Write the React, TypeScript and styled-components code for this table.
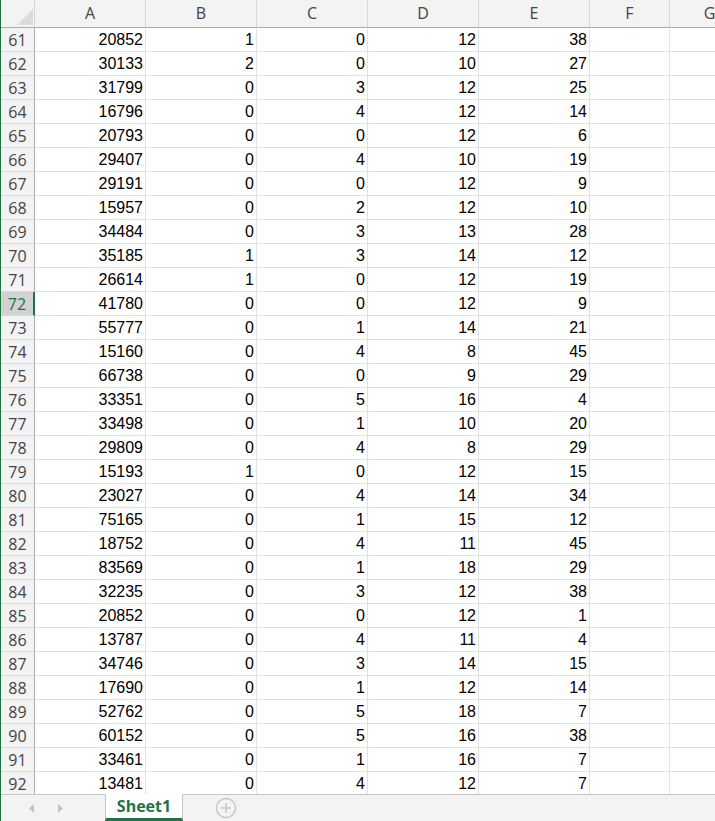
import styled, { createGlobalStyle } from "styled-components";

const GlobalStyle = createGlobalStyle`
  html, body {
    margin: 0;
    padding: 0;
    overflow: hidden;
    background: #fff;
  }
  * { box-sizing: border-box; }
`;

const columns = ["A", "B", "C", "D", "E", "F", "G"];

const rows: number[][] = [
  [20852, 1, 0, 12, 38],
  [30133, 2, 0, 10, 27],
  [31799, 0, 3, 12, 25],
  [16796, 0, 4, 12, 14],
  [20793, 0, 0, 12, 6],
  [29407, 0, 4, 10, 19],
  [29191, 0, 0, 12, 9],
  [15957, 0, 2, 12, 10],
  [34484, 0, 3, 13, 28],
  [35185, 1, 3, 14, 12],
  [26614, 1, 0, 12, 19],
  [41780, 0, 0, 12, 9],
  [55777, 0, 1, 14, 21],
  [15160, 0, 4, 8, 45],
  [66738, 0, 0, 9, 29],
  [33351, 0, 5, 16, 4],
  [33498, 0, 1, 10, 20],
  [29809, 0, 4, 8, 29],
  [15193, 1, 0, 12, 15],
  [23027, 0, 4, 14, 34],
  [75165, 0, 1, 15, 12],
  [18752, 0, 4, 11, 45],
  [83569, 0, 1, 18, 29],
  [32235, 0, 3, 12, 38],
  [20852, 0, 0, 12, 1],
  [13787, 0, 4, 11, 4],
  [34746, 0, 3, 14, 15],
  [17690, 0, 1, 12, 14],
  [52762, 0, 5, 18, 7],
  [60152, 0, 5, 16, 38],
  [33461, 0, 1, 16, 7],
  [13481, 0, 4, 12, 7],
];

const FIRST_ROW = 61;
const SELECTED_ROW = 72;

export default function App() {
  return (
    <>
      <GlobalStyle />
      <Window>
        <Sheet>
          <Grid>
            <Corner>
              <svg width="33" height="27" viewBox="0 0 33 27">
                <polygon points="16,25 32,25 32,9" fill="#dcdcdc" />
              </svg>
            </Corner>
            {columns.map((c) => (
              <ColHeader key={c}>{c}</ColHeader>
            ))}
            {rows.map((r, i) => {
              const n = FIRST_ROW + i;
              return [
                <RowHeader key={`h${n}`} selected={n === SELECTED_ROW}>
                  {n}
                </RowHeader>,
                ...r.map((v, j) => <Cell key={`${n}-${j}`}>{v}</Cell>),
                <Cell key={`${n}-f`} />,
                <Cell key={`${n}-g`} />,
              ];
            })}
          </Grid>
        </Sheet>
        <TabBar>
          <NavArrows>
            <svg width="6" height="9" viewBox="0 0 6 9">
              <polygon points="5,0 5,9 0,4.5" fill="#c3c3c3" />
            </svg>
            <svg width="6" height="9" viewBox="0 0 6 9">
              <polygon points="1,0 1,9 6,4.5" fill="#c3c3c3" />
            </svg>
          </NavArrows>
          <SheetTab>Sheet1</SheetTab>
          <AddSheet>
            <svg width="22" height="22" viewBox="0 0 22 22">
              <circle cx="11" cy="11" r="9.5" fill="none" stroke="#c8c8c8" strokeWidth="1.5" />
              <path d="M11 6v10M6 11h10" stroke="#c8c8c8" strokeWidth="1.5" />
            </svg>
          </AddSheet>
        </TabBar>
      </Window>
    </>
  );
}

const Window = styled.div`
  width: 715px;
  height: 821px;
  display: flex;
  flex-direction: column;
  border-left: 1px solid #217346;
  overflow: hidden;
`;

const Sheet = styled.div`
  height: 794px;
  overflow: hidden;
`;

const Grid = styled.div`
  display: grid;
  grid-template-columns: 34px repeat(5, 111px) 80px 80px;
  grid-template-rows: 28px;
  grid-auto-rows: 24px;
`;

const Corner = styled.div`
  background: #f3f3f3;
  border-right: 1px solid #d4d4d4;
  border-bottom: 1px solid #ababab;
  display: flex;
`;

const ColHeader = styled.div`
  background: #f3f3f3;
  border-right: 1px solid #d9d9d9;
  border-bottom: 1px solid #ababab;
  display: flex;
  align-items: center;
  justify-content: center;
  padding-bottom: 1px;
  font-family: "Open Sans", "Noto Sans", sans-serif;
  font-size: 16px;
  color: #444;
`;

const RowHeader = styled.div<{ selected?: boolean }>`
  background: ${(p) => (p.selected ? "#d2d2d2" : "#f3f3f3")};
  border-right: ${(p) => (p.selected ? "2px solid #217346" : "1px solid #ababab")};
  border-bottom: 1px solid #d9d9d9;
  display: flex;
  align-items: center;
  justify-content: center;
  padding-top: 1px;
  font-family: "Open Sans", "Noto Sans", sans-serif;
  font-size: 16px;
  color: ${(p) => (p.selected ? "#217346" : "#444")};
`;

const Cell = styled.div`
  border-right: 1px solid #e1e1e1;
  border-bottom: 1px solid #e1e1e1;
  display: flex;
  align-items: flex-end;
  justify-content: flex-end;
  padding: 0 2px 2px 0;
  font-family: "Liberation Sans", Arial, sans-serif;
  font-size: 16px;
  line-height: 18px;
  color: #000;
`;

const TabBar = styled.div`
  height: 27px;
  display: flex;
  background: #f3f3f3;
  border-top: 1px solid #c6c6c6;
`;

const NavArrows = styled.div`
  width: 104px;
  display: flex;
  align-items: center;
  gap: 22px;
  padding-left: 28px;
`;

const SheetTab = styled.div`
  width: 78px;
  margin-top: -1px;
  background: #fff;
  border-left: 1px solid #c6c6c6;
  border-right: 1px solid #c6c6c6;
  border-bottom: 3px solid #217346;
  display: flex;
  align-items: center;
  justify-content: center;
  font-family: "Open Sans", "Noto Sans", sans-serif;
  font-weight: 700;
  font-size: 16px;
  color: #217346;
`;

const AddSheet = styled.div`
  display: flex;
  align-items: center;
  padding-left: 32px;
`;
